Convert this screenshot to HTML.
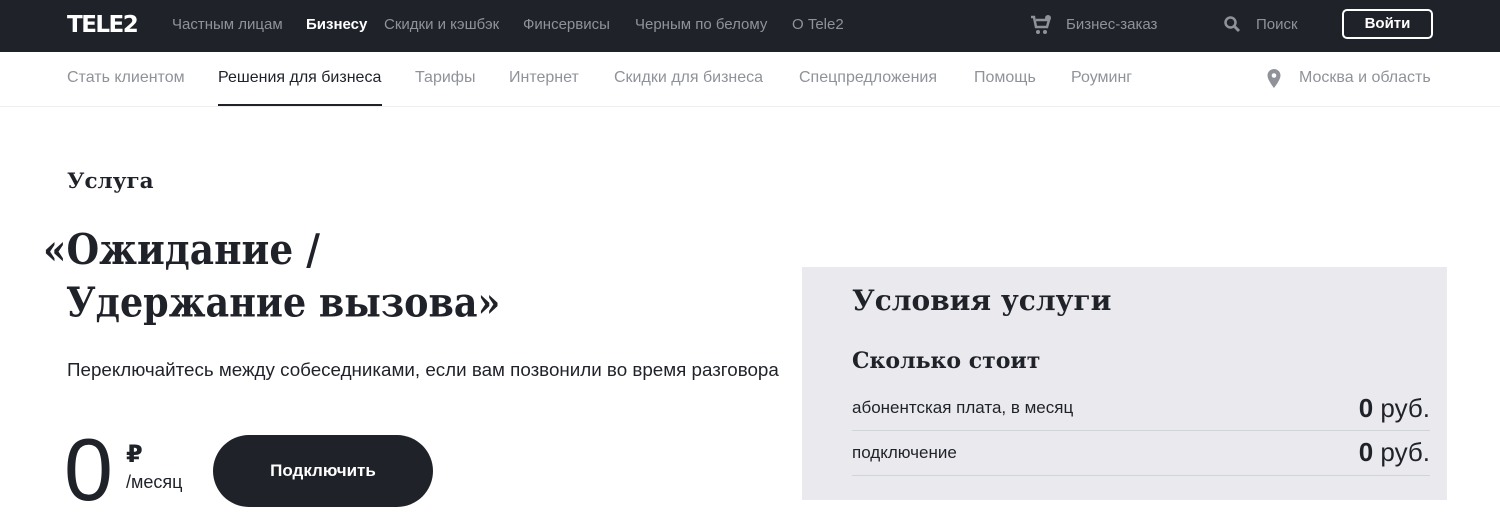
<!DOCTYPE html>
<html><head><meta charset="utf-8"><style>
*{margin:0;padding:0;box-sizing:border-box}
body{width:1500px;height:526px;overflow:hidden;background:#fff;font-family:"Liberation Sans","DejaVu Sans",sans-serif;color:#1f2229;position:relative}
.top{position:absolute;left:0;top:0;width:1500px;height:52px;background:#1f2229}
.a{position:absolute;white-space:nowrap}
.tn{font-size:15px;color:#8f9399;top:16px}
.sn{font-size:16px;color:#8f9399;top:69px}
.serif{font-family:"DejaVu Serif","Liberation Serif",serif;font-weight:bold}
.big{font-size:37.5px;line-height:48px;transform:scaleY(1.13);transform-origin:0 0}
</style></head><body>
<div class="top"></div>
<div class="a" style="left:67px;top:12px;font-size:23px;font-weight:900;color:#fff;letter-spacing:-1.5px;font-family:'DejaVu Sans',sans-serif">TELE2</div>
<div class="a tn" style="left:172px">Частным лицам</div>
<div class="a tn" style="left:306px;color:#fff;font-weight:bold">Бизнесу</div>
<div class="a tn" style="left:384px">Скидки и кэшбэк</div>
<div class="a tn" style="left:523px">Финсервисы</div>
<div class="a tn" style="left:635px">Черным по белому</div>
<div class="a tn" style="left:792px">О Tele2</div>
<svg class="a" style="left:1030px;top:14px" width="22" height="22" viewBox="0 0 22 22"><path d="M1 3h3l2 10h11l2-7H6" fill="none" stroke="#8f9399" stroke-width="2.5"/><circle cx="18" cy="4" r="3" fill="#8f9399"/><circle cx="8" cy="18" r="2" fill="#8f9399"/><circle cx="15" cy="18" r="2" fill="#8f9399"/></svg>
<div class="a tn" style="left:1066px">Бизнес-заказ</div>
<svg class="a" style="left:1223px;top:15px" width="18" height="18" viewBox="0 0 18 18"><circle cx="7.5" cy="7.5" r="5" fill="none" stroke="#8f9399" stroke-width="2.5"/><path d="M11 11l5 5" stroke="#8f9399" stroke-width="3"/></svg>
<div class="a tn" style="left:1256px">Поиск</div>
<div class="a" style="left:1342px;top:9px;width:91px;height:30px;border:2px solid #fff;border-radius:5px;color:#fff;font-size:15px;font-weight:bold;text-align:center;line-height:25px">Войти</div>
<div class="a sn" style="left:67px">Стать клиентом</div>
<div class="a sn" style="left:218px;color:#1f2229">Решения для бизнеса</div>
<div class="a" style="left:218px;top:104px;width:164px;height:2px;background:#1f2229"></div>
<div class="a sn" style="left:415px">Тарифы</div>
<div class="a sn" style="left:509px">Интернет</div>
<div class="a sn" style="left:614px">Скидки для бизнеса</div>
<div class="a sn" style="left:799px">Спецпредложения</div>
<div class="a sn" style="left:974px">Помощь</div>
<div class="a sn" style="left:1071px">Роуминг</div>
<svg class="a" style="left:1267px;top:69px" width="14" height="19" viewBox="0 0 14 19"><path d="M7 0a6.5 6.5 0 0 0-6.5 6.5C.5 11 7 19 7 19s6.5-8 6.5-12.5A6.5 6.5 0 0 0 7 0z" fill="#8f9399"/><circle cx="7" cy="6.5" r="2.3" fill="#fff"/></svg>
<div class="a sn" style="left:1299px">Москва и область</div>
<div class="a" style="left:0;top:106px;width:1500px;height:1px;background:#eceef0"></div>
<div class="a serif" style="left:67px;top:169px;font-size:21.5px">Услуга</div>
<div class="a serif big" style="left:43px;top:222px">«Ожидание /</div>
<div class="a serif big" style="left:66px;top:276px;font-size:36.5px">Удержание вызова»</div>
<div class="a" style="left:67px;top:359px;font-size:18.8px">Переключайтесь между собеседниками, если вам позвонили во время разговора</div>
<div class="a" style="left:64px;top:420px;font-size:88px;line-height:100px">0</div>
<div class="a" style="left:126px;top:440px;font-size:24px;font-weight:bold">₽</div>
<div class="a" style="left:126px;top:472px;font-size:18px">/месяц</div>
<div class="a" style="left:213px;top:435px;width:220px;height:72px;background:#1f2229;border-radius:36px;color:#fff;font-weight:bold;font-size:17px;text-align:center;line-height:72px">Подключить</div>
<div class="a" style="left:802px;top:267px;width:645px;height:233px;background:#e9e9ee"></div>
<div class="a serif" style="left:852px;top:284px;font-size:28px">Условия услуги</div>
<div class="a serif" style="left:852px;top:348px;font-size:22px">Сколько стоит</div>
<div class="a" style="left:852px;top:398px;font-size:17px">абонентская плата, в месяц</div>
<div class="a" style="right:70px;top:393px;font-size:26px"><b>0</b> руб.</div>
<div class="a" style="left:852px;top:430px;width:578px;height:1px;background:#cfd6d8"></div>
<div class="a" style="left:852px;top:443px;font-size:17px">подключение</div>
<div class="a" style="right:70px;top:437px;font-size:26px"><b>0</b> руб.</div>
<div class="a" style="left:852px;top:475px;width:578px;height:1px;background:#cfd6d8"></div>
</body></html>
